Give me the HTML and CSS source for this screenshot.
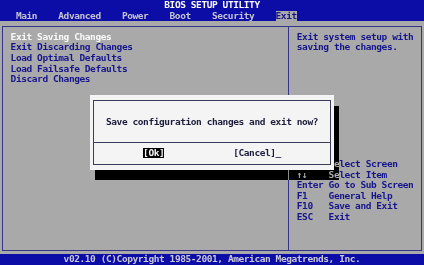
FILE: index.html
```html
<!DOCTYPE html>
<html>
<head>
    <title>BIOS Setup Utility</title>
    <link rel="stylesheet" href="styles.css">
</head>
<body>
    <div class="screen">
        <header class="topbar">
            <div class="title">BIOS SETUP UTILITY</div>
            <nav class="menu"><span>Main</span><span>Advanced</span><span>Power</span><span>Boot</span><span>Security</span><span class="active">Exit</span></nav>
        </header>

        <div class="frame">
            <div class="box">
                <section class="items">
                    <div class="item selected">Exit Saving Changes</div>
                    <div class="item">Exit Discarding Changes</div>
                    <div class="item">Load Optimal Defaults</div>
                    <div class="item">Load Failsafe Defaults</div>
                    <div class="item">Discard Changes</div>
                </section>
                <aside class="help">
                    <p class="desc">Exit system setup with<br>saving the changes.</p>
                    <div class="keys">
                        <span class="key">→←</span><span>Select Screen</span>
                        <span class="key">↑↓</span><span>Select Item</span>
                        <span class="key">Enter</span><span>Go to Sub Screen</span>
                        <span class="key">F1</span><span>General Help</span>
                        <span class="key">F10</span><span>Save and Exit</span>
                        <span class="key">ESC</span><span>Exit</span>
                    </div>
                </aside>
            </div>
        </div>

        <footer class="footer">v02.10 (C)Copyright 1985-2001, American Megatrends, Inc.</footer>

        <!-- modal confirm box, drawn over the screen -->
        <div class="dialog-shadow"></div>
        <div class="dialog">
            <div class="dialog-inner">
                <div class="question">Save configuration changes and exit now?</div>
                <div class="choices">
                    <span class="choice current">[Ok]</span>
                    <span class="choice">[Cancel]_</span>
                </div>
            </div>
        </div>
    </div>
</body>
</html>
```

FILE: styles.css
```css
:root {
    --cw: 5.3px;
    --lh: 10.6px;
    --blue: #0c0ca6;
    --grey: #a9a9a9;
    --ink: #16168c;
}
* {
    box-sizing: border-box;
}
body {
    margin: 0;
    background-color: var(--grey);
    font-family: 'DejaVu Sans Mono', 'Liberation Mono', monospace;
    font-weight: bold;
    font-size: 9.5px;
    letter-spacing: -0.42px;
    line-height: var(--lh);
}
.screen {
    position: relative;
    width: 424px;
    height: 265px;
    overflow: hidden;
}
.topbar {
    height: calc(var(--lh) * 2);
    background-color: var(--blue);
}
.title {
    color: #fafafa;
    text-align: center;
    height: var(--lh);
}
.menu {
    display: flex;
    gap: calc(var(--cw) * 4);
    padding-left: calc(var(--cw) * 3);
    height: var(--lh);
    color: #c4c4d4;
}
.menu span {
    display: inline-block;
    height: var(--lh);
}
.menu .active {
    background-color: var(--grey);
    color: var(--ink);
}
.frame {
    height: calc(var(--lh) * 22);
    padding: 5px 2px 3px 2px;
}
.box {
    height: 100%;
    border: 1px solid #34348a;
    display: flex;
}
.items {
    width: 286px;
    border-right: 1px solid #34348a;
    padding: 4.6px 0 0 7.6px;
    color: var(--ink);
}
.item {
    height: var(--lh);
    white-space: pre;
}
.item.selected {
    color: #fafafa;
}
.help {
    flex: 1;
    padding: 4.6px 0 0 7.8px;
    color: var(--ink);
}
.desc {
    margin: 0;
}
.keys {
    margin-top: calc(var(--lh) * 10);
    display: grid;
    grid-template-columns: calc(var(--cw) * 6) auto;
    grid-auto-rows: var(--lh);
}
.footer {
    height: var(--lh);
    background-color: var(--blue);
    color: #c8c8d8;
    text-align: center;
}
.dialog {
    position: absolute;
    left: calc(var(--cw) * 17);
    top: calc(var(--lh) * 9);
    width: calc(var(--cw) * 46);
    height: calc(var(--lh) * 7);
    background-color: #f4f4f4;
    padding: 5px 2.5px;
    color: #1c1c3c;
}
.dialog-inner {
    height: 100%;
    border: 1px solid #3a3a5a;
}
.question {
    text-align: center;
    padding: 15.2px 0 0 0;
    height: 42px;
    border-bottom: 1px solid #3a3a5a;
}
.choices {
    display: flex;
    gap: calc(var(--cw) * 13);
    padding: 4.4px 0 0 49.5px;
    white-space: pre;
}
.choice {
    height: var(--lh);
}
.choice.current {
    background-color: #000;
    color: #f4f4f4;
}
.dialog-shadow {
    position: absolute;
    left: calc(var(--cw) * 18);
    top: calc(var(--lh) * 10);
    width: calc(var(--cw) * 46);
    height: calc(var(--lh) * 7);
    backdrop-filter: invert(1) grayscale(1) brightness(0.68) contrast(1.86);
}
```
